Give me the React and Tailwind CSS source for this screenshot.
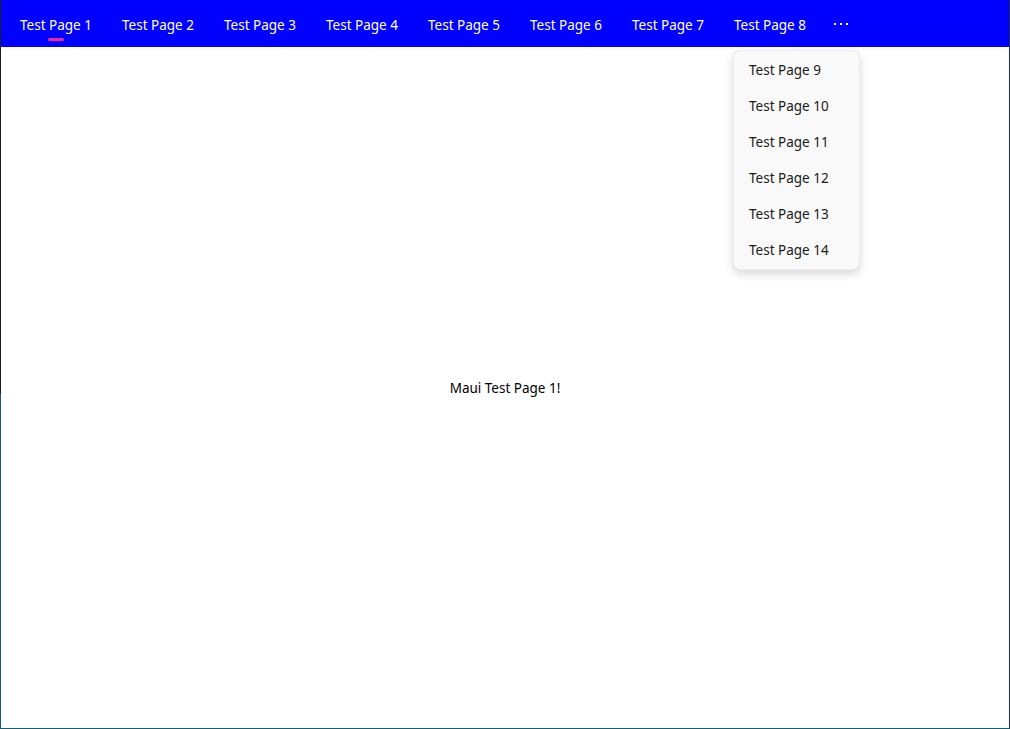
import { useState } from "react"

const pages = Array.from({ length: 14 }, (_, i) => `Test Page ${i + 1}`)
const visible = pages.slice(0, 8)
const overflow = pages.slice(8)

export default function App() {
  const [active, setActive] = useState(0)
  const [menuOpen, setMenuOpen] = useState(true)

  return (
    <div
      className="relative flex w-[1010px] h-[729px] bg-white text-[13.5px] overflow-hidden"
      style={{ fontFamily: '"Segoe UI", "Noto Sans", sans-serif' }}
    >
      {/* window edge, desktop shows through on the left */}
      <div className="w-px shrink-0 bg-[linear-gradient(to_bottom,#1c1c1c_0%,#1c1c1c_54%,#0e5f78_54%,#0e5f78_100%)]" />

      <div className="flex flex-1 flex-col border-r border-b border-r-[#1d2a4a] border-b-[#0e5f78]">
        {/* Tab bar */}
        <nav className="relative flex h-[47px] shrink-0 items-center bg-[#0000ff] pl-[4px]">
          {visible.map((p, i) => (
            <button
              key={p}
              onClick={() => setActive(i)}
              className="relative flex h-full w-[102px] items-center justify-center text-white"
            >
              <span className="translate-y-[1.5px]">{p}</span>
              {active === i && (
                <span className="absolute left-1/2 top-[38px] h-[3px] w-[16px] -translate-x-1/2 rounded-full bg-[#f5238f]" />
              )}
            </button>
          ))}
          <button
            onClick={() => setMenuOpen(!menuOpen)}
            className="flex h-full w-[40px] items-center justify-center gap-[4px]"
          >
            <span className="h-[2px] w-[2px] bg-white" />
            <span className="h-[2px] w-[2px] bg-white" />
            <span className="h-[2px] w-[2px] bg-white" />
          </button>

          {menuOpen && (
            <div className="absolute left-[732px] top-[50px] z-10 w-[127px] rounded-lg bg-[#f9f9f9] pt-[1px] pb-[1px] shadow-[0_4px_10px_rgba(0,0,0,0.16)] border border-black/5">
              {overflow.map((p, i) => (
                <button
                  key={p}
                  onClick={() => {
                    setActive(i + 8)
                    setMenuOpen(false)
                  }}
                  className="flex h-[36px] w-full items-center px-[15px] text-left text-[#1a1a1a]"
                >
                  {p}
                </button>
              ))}
            </div>
          )}
        </nav>

        {/* Page content */}
        <main className="flex flex-1 items-center justify-center text-black">
          <span className="translate-y-[1px]">Maui {pages[active]}!</span>
        </main>
      </div>
    </div>
  )
}
